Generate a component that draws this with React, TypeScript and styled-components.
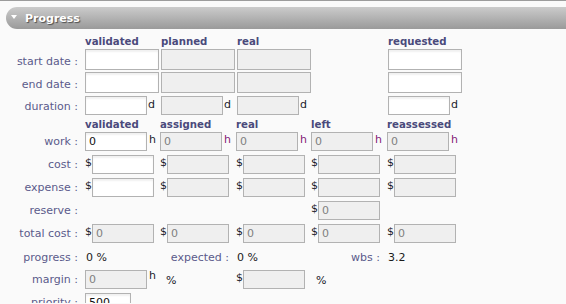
import styled, { createGlobalStyle } from 'styled-components';

const DATE_COLS = '85px 76px 76px 75px 76px 1fr';
const NUM_COLS = '85px 75px 76px 75px 76px 1fr';

const GlobalStyle = createGlobalStyle`
  * { box-sizing: border-box; }
  body {
    margin: 0;
    background: #fafafa;
    font-family: "DejaVu Sans", Verdana, sans-serif;
    font-size: 11px;
  }
`;

const Page = styled.div`
  border-top: 1px solid #9c9c9c;
  padding-top: 6px;
  height: 303px;
  overflow: hidden;
`;

const SectionBar = styled.div`
  margin-left: 6px;
  height: 22px;
  border-radius: 11px 0 0 11px;
  background: linear-gradient(#cbcbcb, #9a9a9a);
  display: flex;
  align-items: center;
  gap: 8px;
  padding-left: 5px;
`;

const Arrow = styled.span`
  width: 0;
  height: 0;
  margin-top: -3px;
  border-left: 3px solid transparent;
  border-right: 3px solid transparent;
  border-top: 4px solid #fff;
`;

const Title = styled.span`
  font-weight: bold;
  font-size: 11px;
  color: #fff;
  text-shadow: 1px 1px 1px rgba(0, 0, 0, 0.55);
`;

const Form = styled.div`
  padding-top: 5px;
`;

const Row = styled.div<{ $cols: string; $h: number; $pt?: number }>`
  display: grid;
  grid-template-columns: ${(p) => p.$cols};
  align-items: start;
  height: ${(p) => p.$h}px;
  padding-top: ${(p) => p.$pt ?? 0}px;
`;

const Heading = styled.div<{ $col: number }>`
  grid-column: ${(p) => p.$col};
  font-weight: bold;
  font-size: 10.2px;
  line-height: 14px;
  color: #4a4a7c;
  white-space: nowrap;
`;

const Label = styled.div<{ $col?: number; $lh?: number; $top?: number }>`
  grid-column: ${(p) => p.$col ?? 1};
  text-align: right;
  padding-right: 7px;
  padding-top: ${(p) => p.$top ?? 0}px;
  line-height: ${(p) => p.$lh ?? 19}px;
  color: #5b5b8b;
  white-space: nowrap;
`;

const Cell = styled.div<{ $col: number; $top?: number }>`
  grid-column: ${(p) => p.$col};
  display: flex;
  align-items: flex-start;
  margin-top: ${(p) => p.$top ?? 0}px;
`;

const Field = styled.input<{ $w: number; $h?: number }>`
  width: ${(p) => p.$w}px;
  height: ${(p) => p.$h ?? 19}px;
  margin: 0;
  padding: 0 3px;
  font-family: "DejaVu Sans", Verdana, sans-serif;
  font-size: 11px;
  color: #111;
  background: #fff;
  border: 1px solid #b2b2b2;
  border-radius: 0;
  box-shadow: inset 0 2px 2px rgba(0, 0, 0, 0.06);
  outline: none;

  &:disabled {
    background: #efefef;
    color: #808080;
    box-shadow: none;
  }
`;

const Unit = styled.span<{ $top?: number; $ml?: number; $color?: string }>`
  line-height: 11px;
  padding-top: ${(p) => p.$top ?? 2}px;
  margin-left: ${(p) => p.$ml ?? 0}px;
  color: ${(p) => p.$color ?? '#1a1a2a'};
`;

const Value = styled.div<{ $col: number }>`
  grid-column: ${(p) => p.$col};
  line-height: 19px;
  padding-top: 1px;
  padding-left: 1px;
  color: #1a1a1a;
  white-space: nowrap;
`;

const PURPLE = '#851a78';

function Money({ col, value = '', enabled = false }: { col: number; value?: string; enabled?: boolean }) {
  return (
    <Cell $col={col}>
      <Unit $top={2}>$</Unit>
      <Field $w={62} disabled={!enabled} defaultValue={value} />
    </Cell>
  );
}

function Hours({ col, enabled = false, color = PURPLE }: { col: number; enabled?: boolean; color?: string }) {
  return (
    <Cell $col={col}>
      <Field $w={62} disabled={!enabled} defaultValue="0" />
      <Unit $top={2} $ml={2} $color={color}>h</Unit>
    </Cell>
  );
}

function Days({ col, enabled = false }: { col: number; enabled?: boolean }) {
  return (
    <Cell $col={col} $top={1}>
      <Field $w={62} disabled={!enabled} />
      <Unit $top={3} $ml={1}>d</Unit>
    </Cell>
  );
}

export default function App() {
  return (
    <Page>
      <GlobalStyle />
      <SectionBar>
        <Arrow />
        <Title>Progress</Title>
      </SectionBar>
      <Form>
        <Row $cols={DATE_COLS} $h={15} $pt={1}>
          <Heading $col={2}>validated</Heading>
          <Heading $col={3}>planned</Heading>
          <Heading $col={4}>real</Heading>
          <Heading $col={6}>requested</Heading>
        </Row>
        <Row $cols={DATE_COLS} $h={23}>
          <Label $lh={21} $top={2}>start date :</Label>
          <Cell $col={2}><Field $w={74} $h={21} /></Cell>
          <Cell $col={3}><Field $w={74} $h={21} disabled /></Cell>
          <Cell $col={4}><Field $w={74} $h={21} disabled /></Cell>
          <Cell $col={6}><Field $w={74} $h={21} /></Cell>
        </Row>
        <Row $cols={DATE_COLS} $h={23}>
          <Label $lh={21} $top={2}>end date :</Label>
          <Cell $col={2}><Field $w={74} $h={21} /></Cell>
          <Cell $col={3}><Field $w={74} $h={21} disabled /></Cell>
          <Cell $col={4}><Field $w={74} $h={21} disabled /></Cell>
          <Cell $col={6}><Field $w={74} $h={21} /></Cell>
        </Row>
        <Row $cols={DATE_COLS} $h={23}>
          <Label $top={2}>duration :</Label>
          <Days col={2} enabled />
          <Days col={3} />
          <Days col={4} />
          <Days col={6} enabled />
        </Row>

        <Row $cols={NUM_COLS} $h={14}>
          <Heading $col={2}>validated</Heading>
          <Heading $col={3}>assigned</Heading>
          <Heading $col={4}>real</Heading>
          <Heading $col={5}>left</Heading>
          <Heading $col={6}>reassessed</Heading>
        </Row>
        <Row $cols={NUM_COLS} $h={23}>
          <Label>work :</Label>
          <Hours col={2} enabled color="#1a1a2a" />
          <Hours col={3} />
          <Hours col={4} />
          <Hours col={5} />
          <Hours col={6} />
        </Row>
        <Row $cols={NUM_COLS} $h={23}>
          <Label>cost :</Label>
          <Money col={2} enabled />
          <Money col={3} />
          <Money col={4} />
          <Money col={5} />
          <Money col={6} />
        </Row>
        <Row $cols={NUM_COLS} $h={23}>
          <Label>expense :</Label>
          <Money col={2} enabled />
          <Money col={3} />
          <Money col={4} />
          <Money col={5} />
          <Money col={6} />
        </Row>
        <Row $cols={NUM_COLS} $h={23}>
          <Label>reserve :</Label>
          <Money col={5} value="0" />
        </Row>
        <Row $cols={NUM_COLS} $h={23}>
          <Label>total cost :</Label>
          <Money col={2} value="0" />
          <Money col={3} value="0" />
          <Money col={4} value="0" />
          <Money col={5} value="0" />
          <Money col={6} value="0" />
        </Row>
        <Row $cols={NUM_COLS} $h={23}>
          <Label $top={1}>progress :</Label>
          <Value $col={2}>0 %</Value>
          <Label $col={3} $top={1}>expected :</Label>
          <Value $col={4}>0 %</Value>
          <Label $col={5} $top={1}>wbs :</Label>
          <Value $col={6}>3.2</Value>
        </Row>
        <Row $cols={NUM_COLS} $h={23}>
          <Label>margin :</Label>
          <Cell $col={2}>
            <Field $w={62} disabled defaultValue="0" />
            <Unit $top={0} $ml={2}>h</Unit>
            <Unit $top={5} $ml={10}>%</Unit>
          </Cell>
          <Cell $col={4}>
            <Unit $top={2}>$</Unit>
            <Field $w={62} disabled />
            <Unit $top={5} $ml={11}>%</Unit>
          </Cell>
        </Row>
        <Row $cols={NUM_COLS} $h={23}>
          <Label>priority :</Label>
          <Cell $col={2}><Field $w={46} defaultValue="500" /></Cell>
        </Row>
      </Form>
    </Page>
  );
}
